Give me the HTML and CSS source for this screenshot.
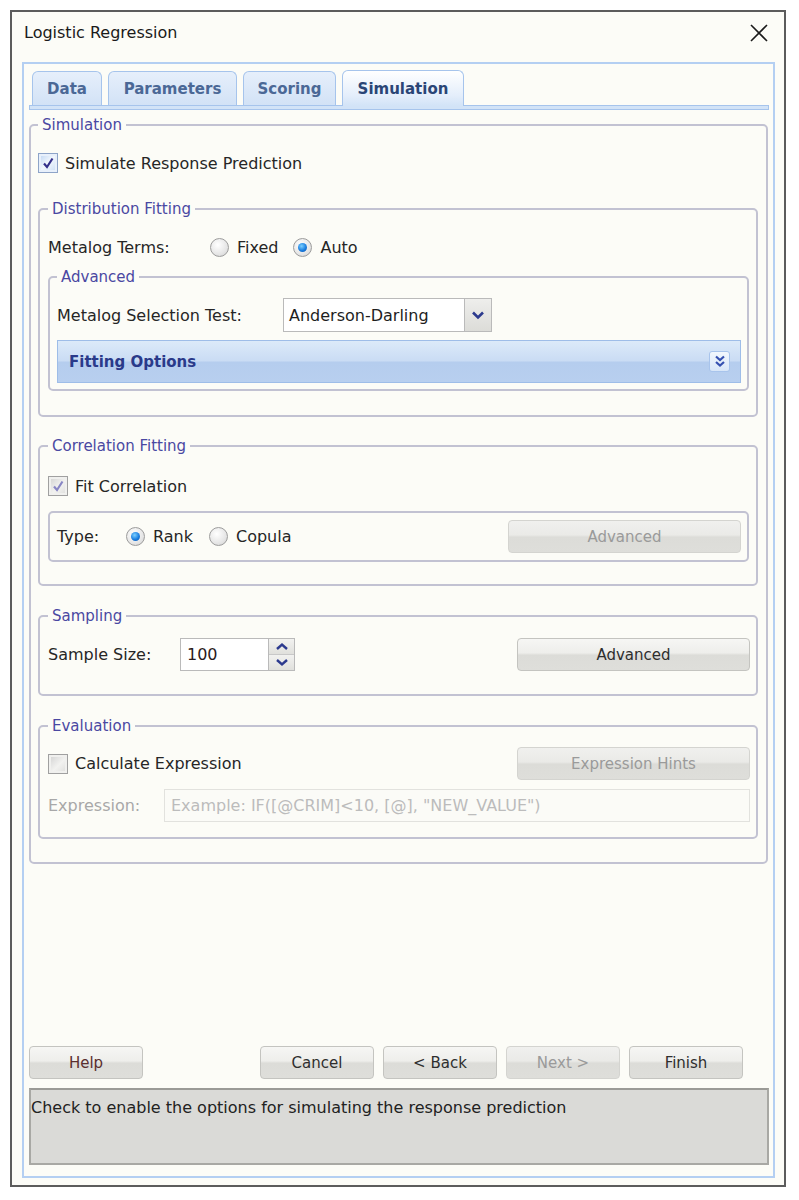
FILE: index.html
```html
<!DOCTYPE html>
<html lang="en">
<head>
  <meta charset="UTF-8" />
  <meta name="viewport" content="width=device-width, initial-scale=1" />
  <title>Logistic Regression</title>
  <link rel="stylesheet" href="styles.css">
</head>
<body>
  <div class="dialog">
    <div class="titlebar">
      <span class="title">Logistic Regression</span>
      <svg class="close" width="18" height="18" viewBox="0 0 18 18">
        <path d="M1 1 L17 17 M17 1 L1 17" stroke="#1a1a1a" stroke-width="1.6" fill="none" />
      </svg>
    </div>

    <div class="panel">
      <div class="tabs">
        <div class="tab">Data</div>
        <div class="tab">Parameters</div>
        <div class="tab">Scoring</div>
        <div class="tab active">Simulation</div>
      </div>
      <div class="tab-band"></div>

      <fieldset class="group sim">
        <legend>Simulation</legend>
        <label class="check-row">
          <span class="check on">
            <svg width="14" height="14" viewBox="0 0 14 14"><path d="M3 7.5 L6 11 L11.5 2.5" stroke="#34308a" stroke-width="2.2" fill="none" /></svg>
          </span>
          Simulate Response Prediction
        </label>

        <fieldset class="group dist">
          <legend>Distribution Fitting</legend>
          <div class="row">
            <span class="label terms-label">Metalog Terms:</span>
            <span class="radio"></span><span class="radio-text">Fixed</span>
            <span class="radio on"></span><span class="radio-text">Auto</span>
          </div>

          <fieldset class="group adv">
            <legend>Advanced</legend>
            <div class="row">
              <span class="label test-label">Metalog Selection Test:</span>
              <div class="select">
                <span class="select-value">Anderson-Darling</span>
                <span class="select-btn">
                  <svg width="14" height="10" viewBox="0 0 14 10"><path d="M2 2.5 L7 7.5 L12 2.5" stroke="#2c3a8e" stroke-width="2.6" fill="none" /></svg>
                </span>
              </div>
            </div>
            <div class="fit-bar">
              <span>Fitting Options</span>
              <span class="fit-icon">
                <svg width="12" height="13" viewBox="0 0 12 13"><path d="M2 1.5 L6 5 L10 1.5 M2 7 L6 10.5 L10 7" stroke="#3550b0" stroke-width="2.2" fill="none" /></svg>
              </span>
            </div>
          </fieldset>
        </fieldset>

        <fieldset class="group corr">
          <legend>Correlation Fitting</legend>
          <label class="check-row">
            <span class="check on off">
              <svg width="14" height="14" viewBox="0 0 14 14"><path d="M3 7.5 L6 11 L11.5 2.5" stroke="#8886c4" stroke-width="2.2" fill="none" /></svg>
            </span>
            Fit Correlation
          </label>
          <div class="type-box">
            <span class="label type-label">Type:</span>
            <span class="radio on"></span><span class="radio-text rank">Rank</span>
            <span class="radio"></span><span class="radio-text">Copula</span>
            <button class="btn disabled">Advanced</button>
          </div>
        </fieldset>

        <fieldset class="group samp">
          <legend>Sampling</legend>
          <div class="row tall">
            <span class="label size-label">Sample Size:</span>
            <div class="spinner">
              <span class="spin-value">100</span>
              <span class="spin-btns">
                <span class="spin-btn"><svg width="14" height="9" viewBox="0 0 14 9"><path d="M2 7 L7 2.5 L12 7" stroke="#2c3a8e" stroke-width="2.4" fill="none" /></svg></span>
                <span class="spin-btn"><svg width="14" height="9" viewBox="0 0 14 9"><path d="M2 2 L7 6.5 L12 2" stroke="#2c3a8e" stroke-width="2.4" fill="none" /></svg></span>
              </span>
            </div>
            <button class="btn">Advanced</button>
          </div>
        </fieldset>

        <fieldset class="group eval">
          <legend>Evaluation</legend>
          <div class="row tall">
            <label class="check-row">
              <span class="check off"></span>
              Calculate Expression
            </label>
            <button class="btn disabled">Expression Hints</button>
          </div>
          <div class="row tall expr-row">
            <span class="label expr-label">Expression:</span>
            <div class="expr-input">Example: IF([@CRIM]&lt;10, [@], "NEW_VALUE")</div>
          </div>
        </fieldset>
      </fieldset>

      <div class="footer">
        <div class="buttons">
          <button class="btn small help">Help</button>
          <button class="btn small">Cancel</button>
          <button class="btn small">&lt; Back</button>
          <button class="btn small disabled">Next &gt;</button>
          <button class="btn small">Finish</button>
        </div>
        <div class="status">Check to enable the options for simulating the response prediction</div>
      </div>
    </div>
  </div>
</body>
</html>
```

FILE: styles.css
```css
* {
  box-sizing: border-box;
}
body {
  margin: 0;
  background: #ffffff;
  font-family: "DejaVu Sans", Verdana, sans-serif;
  font-size: 16px;
  color: #262626;
}
.dialog {
  margin: 10px 0 0 10px;
  width: 776px;
  height: 1177px;
  border: 2px solid #5c5c5c;
  background: #fcfcf7;
  display: flex;
  flex-direction: column;
}
.titlebar {
  height: 50px;
  padding: 11px 16px 0 12px;
  display: flex;
  align-items: flex-start;
  justify-content: space-between;
}
.title {
  font-size: 16px;
  line-height: 19px;
  color: #1a1a1a;
}
.close {
  margin-top: 1px;
}
.panel {
  flex: 1;
  margin: 0 9px 7px 10px;
  border: 2px solid #b4cff2;
  padding: 0 4px 11px 5px;
  display: flex;
  flex-direction: column;
}

/* tabs */
.tabs {
  display: flex;
  align-items: flex-end;
  gap: 6px;
  padding: 6px 0 0 3px;
}
.tab {
  height: 34px;
  padding: 0 14px;
  border: 1px solid #a6c4ec;
  border-bottom: none;
  border-radius: 6px 6px 0 0;
  background: linear-gradient(#e6effb, #d2e2f6);
  color: #4b6896;
  font-size: 15px;
  font-weight: bold;
  display: flex;
  align-items: center;
}
.tab:nth-child(1) { width: 70px; justify-content: center; }
.tab:nth-child(2) { width: 129px; justify-content: center; }
.tab:nth-child(3) { width: 93px; justify-content: center; }
.tab.active {
  width: 122px;
  justify-content: center;
  height: 36px;
  margin-bottom: -1px;
  background: linear-gradient(#ffffff, #e4eefb 70%, #d2e3f7);
  color: #2a4576;
  z-index: 1;
}
.tab-band {
  height: 5px;
  margin-right: 0;
  border: 1px solid #a6c4ec;
  background: #d2e3f7;
}

/* group boxes */
.group {
  margin: 0;
  min-width: 0;
  border: 2px solid #c2c2d2;
  border-radius: 5px;
}
.group legend {
  font-size: 15px;
  line-height: 18px;
  color: #4a48a2;
  padding: 0 4px;
}
.sim {
  margin: 6px 1px 0 0;
  padding: 18px 8px 23px 7px;
}
.dist {
  margin-top: 26px;
  padding: 18px 7px 24px 8px;
}
.adv {
  margin-top: 10px;
  padding: 12px 6px 6px 7px;
}
.corr {
  margin-top: 20px;
  padding: 20px 7px 22px 8px;
}
.samp {
  margin-top: 21px;
  padding: 13px 6px 23px 8px;
}
.eval {
  margin-top: 21px;
  padding: 12px 6px 15px 8px;
}

.row {
  display: flex;
  align-items: center;
  height: 22px;
}
.row.tall {
  height: 33px;
}
.adv .row {
  height: 34px;
}
.expr-row {
  margin-top: 9px;
}
.label {
  flex: none;
}
.terms-label { width: 162px; }
.test-label { width: 226px; }
.type-label { width: 69px; }
.size-label { width: 132px; }
.expr-label { width: 116px; color: #a8a8a8; }

/* checkbox */
.check-row {
  display: flex;
  align-items: center;
  height: 22px;
}
.check {
  width: 20px;
  height: 20px;
  margin-right: 7px;
  border: 1px solid #8ea4c8;
  background: linear-gradient(135deg, #bcd4f2, #f2f7fd 50%, #c8dcf4);
  display: flex;
  align-items: center;
  justify-content: center;
  box-shadow: inset 0 0 0 2px #e8f0fb;
}
.check.off {
  border-color: #a0a0a0;
  background: linear-gradient(135deg, #d0d0d0, #f2f2f0 55%, #dcdcda);
  box-shadow: inset 0 0 0 2px #f0f0ee;
}

/* radio */
.radio {
  width: 19px;
  height: 19px;
  border-radius: 50%;
  border: 1px solid #9c9c9c;
  background: radial-gradient(circle at 40% 35%, #ffffff, #e6e6e6 60%, #cfcfcf);
  display: flex;
  align-items: center;
  justify-content: center;
  flex: none;
}
.radio.on::after {
  content: "";
  width: 9px;
  height: 9px;
  border-radius: 50%;
  background: radial-gradient(circle at 40% 35%, #7cd0ff, #1a7ee0 55%, #0a4fa8);
}
.radio-text {
  margin: 0 15px 0 8px;
}
.radio-text.rank {
  margin-right: 16px;
}

/* dropdown */
.select {
  width: 209px;
  height: 34px;
  border: 1px solid #bababa;
  background: #ffffff;
  display: flex;
}
.select-value {
  flex: 1;
  padding-left: 5px;
  display: flex;
  align-items: center;
  color: #1e1e1e;
}
.select-btn {
  width: 27px;
  border-left: 1px solid #bababa;
  background: linear-gradient(#eeeeec, #dcdcd8);
  display: flex;
  align-items: center;
  justify-content: center;
}

/* fitting options bar */
.fit-bar {
  margin-top: 8px;
  height: 43px;
  border: 1px solid #9ebde8;
  background: linear-gradient(#dceaf9, #cadcf4 48%, #b5cdee 52%, #b8cfef);
  padding: 0 10px 0 11px;
  display: flex;
  align-items: center;
  justify-content: space-between;
  color: #2a3a8a;
  font-size: 15px;
  font-weight: bold;
}
.fit-icon {
  width: 21px;
  height: 21px;
  border: 1px solid #a8c4ec;
  border-radius: 3px;
  background: linear-gradient(#f2f7fd, #d8e6f8);
  display: flex;
  align-items: center;
  justify-content: center;
}

/* correlation type box */
.type-box {
  margin-top: 14px;
  height: 51px;
  border: 2px solid #c2c2d2;
  border-radius: 5px;
  padding: 0 6px 0 7px;
  display: flex;
  align-items: center;
}

/* buttons */
.btn {
  margin-left: auto;
  width: 233px;
  height: 33px;
  border: 1px solid #c4c4c0;
  border-radius: 4px;
  background: linear-gradient(#f6f6f4, #eeeeeb 45%, #dcdcd8 52%, #dededa);
  font-family: "DejaVu Sans", Verdana, sans-serif;
  font-size: 15px;
  color: #2e2e2e;
  padding: 0;
}
.btn.disabled {
  border-color: #d4d4d0;
  background: linear-gradient(#f0f0ee, #eaeae7 45%, #dcdcd8 52%, #dededa);
  color: #9a9a9a;
}

/* spinner */
.spinner {
  width: 115px;
  height: 33px;
  border: 1px solid #bababa;
  background: #ffffff;
  display: flex;
}
.spin-value {
  flex: 1;
  padding-left: 6px;
  display: flex;
  align-items: center;
  color: #2a1a1a;
}
.spin-btns {
  width: 26px;
  border-left: 1px solid #bababa;
  display: flex;
  flex-direction: column;
}
.spin-btn {
  flex: 1;
  background: linear-gradient(#f2f2f0, #e0e0dc);
  display: flex;
  align-items: center;
  justify-content: center;
}
.spin-btn + .spin-btn {
  border-top: 1px solid #c8c8c8;
}

/* expression */
.expr-input {
  flex: 1;
  height: 33px;
  border: 1px solid #e2e2de;
  background: #fbfbf7;
  padding-left: 6px;
  display: flex;
  align-items: center;
  color: #bcbcbc;
}

/* footer */
.footer {
  margin-top: auto;
}
.buttons {
  display: flex;
  gap: 9px;
  padding-right: 26px;
}
.btn.small {
  width: 114px;
  margin-left: 0;
}
.btn.small.help {
  margin-right: auto;
  color: #5a2e2e;
}
.status {
  margin-top: 9px;
  height: 77px;
  border: 2px solid #a8a8a4;
  border-top-color: #9a9a96;
  background: #dadad7;
  padding: 8px 0 0 0;
  line-height: 20px;
  color: #222222;
}
```
